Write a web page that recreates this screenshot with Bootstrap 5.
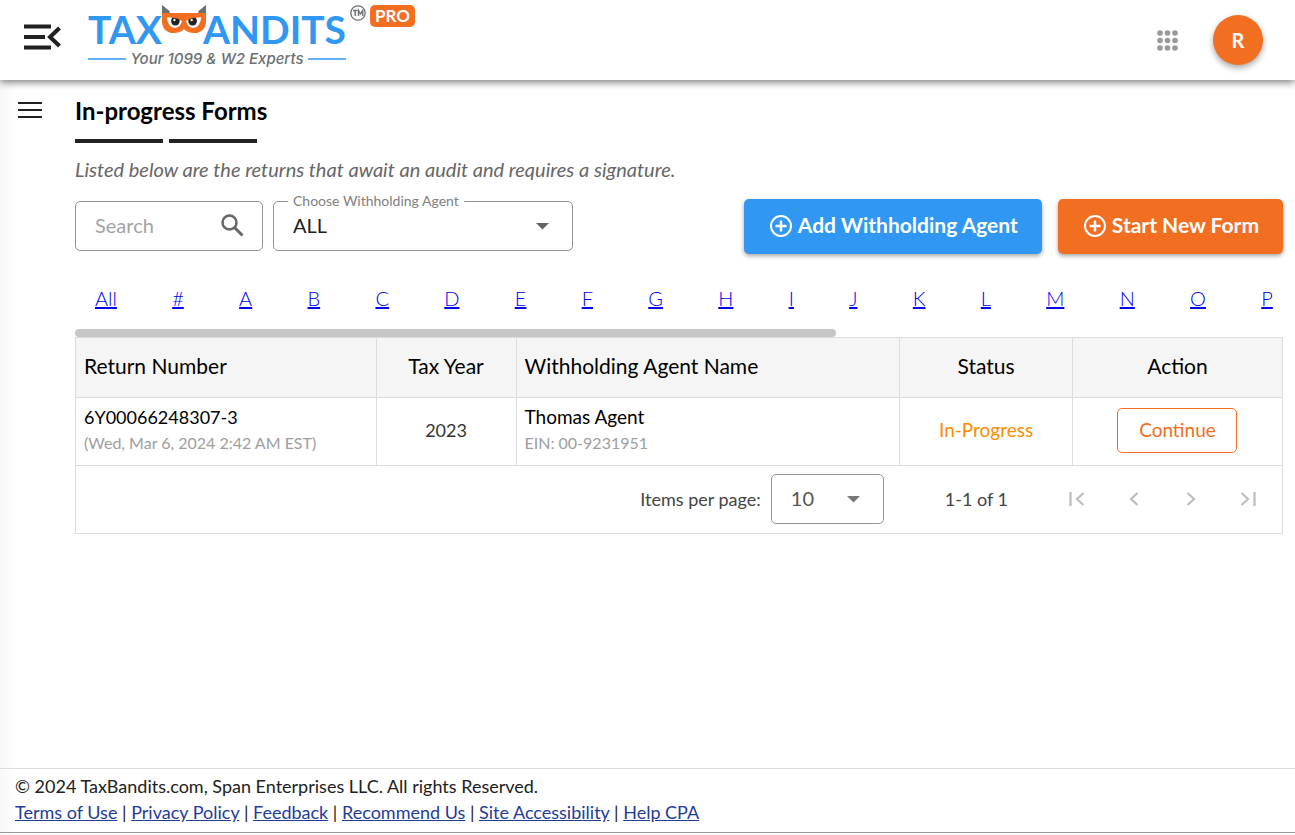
<!DOCTYPE html>
<html lang="en">
<head>
<meta charset="utf-8">
<meta name="viewport" content="width=device-width, initial-scale=1">
<title>In-progress Forms - TaxBandits</title>
<link href="https://cdn.jsdelivr.net/npm/bootstrap@5.3.0/dist/css/bootstrap.min.css" rel="stylesheet">
<style>
:root { --tb-blue: #3097f3; --tb-orange: #f26e21; --tb-line: #dcdcdc; }
body { font-family: Lato, "Liberation Sans", sans-serif; font-size: 18px; line-height: 26px; color: #212121; background: linear-gradient(to right, #f8f8f8, #fff 16px); }
svg { display: block; flex: none; }
.icon-btn { border: 0; background: none; padding: 0; color: #212121; }
.topbar { height: 80px; padding: 0 32px 0 24px; background: #fff; box-shadow: 0 2px 8px rgba(0,0,0,.55); }
.menu-toggle { margin-bottom: 7px; }
.brand { padding-top: 5px; margin-left: 27px; color: #6b7072; text-decoration: none; }
.brand-name { height: 46px; padding-bottom: 3px; font-size: 39px; font-weight: 700; line-height: 38px; color: var(--tb-blue); }
.brand-name svg { margin: 0 -4px 0 -1px; position: relative; z-index: 1; }
.brand-tag { font: italic 500 15px/16px Inter, sans-serif; gap: 4px; }
.brand-tag i { flex: 1; height: 2px; background: #62b0f6; }
.pro-tag { background: var(--tb-orange); color: #fff; border-radius: 5px; font-size: 17px; font-weight: 700; line-height: 22px; padding: 0 5px; margin: 5px 0 0 4px; }
.avatar { width: 50px; height: 50px; background: var(--tb-orange); font-weight: 700; box-shadow: 0 3px 6px rgba(0,0,0,.35); margin-left: 35px; }
.side { width: 75px; padding: 19px 0 0 17px; }
.content { padding: 17px 12px 0 0; min-width: 0; }
.page-title { font-size: 24px; line-height: 28px; font-weight: 700; color: #000; }
.title-bars { gap: 6px; margin-top: 14px; }
.title-bars i { width: 88px; height: 4px; background: #212121; }
.intro { font-size: 20px; font-style: italic; color: #666; margin: 13px 0 17px; }
.fields { gap: 10px; padding-top: 2px; }
.field { border: 1px solid #949494; border-radius: 5px; height: 50px; background: #fff; position: relative; }
.field input, .field select { border: 0; outline: 0; background: none; width: 100%; height: 100%; padding: 0 19px 2px; font-size: 20px; color: #212121; appearance: none; }
.field input::placeholder { color: #a3a3a3; opacity: 1; }
.field > svg { position: absolute; right: 17px; top: 50%; transform: translateY(-50%); pointer-events: none; }
.field label { position: absolute; left: 14px; top: -12px; padding: 0 5px; font-size: 14px; line-height: 22px; background: #fff; color: #808080; white-space: nowrap; }
.f-search { width: 188px; }
.f-agent { width: 300px; }
.f-page { width: 113px; }
.field.f-page select { color: #555; }
.btn-main { height: 55px; border: 0; border-radius: 5px; color: #fff; font-size: 21px; font-weight: 700; padding: 0 24px 3px; gap: 4px; box-shadow: 0 2px 4px rgba(0,0,0,.35); }
.btn-main:hover { color: #fff; }
.bg-blue, .bg-blue:hover { background: var(--tb-blue); }
.bg-orange, .bg-orange:hover { background: var(--tb-orange); }
.letters { padding: 30px 10px 17px 20px; font-size: 20px; font-weight: 300; line-height: 28px; overflow: hidden; }
.letters a { color: #0000ee; text-decoration-thickness: 2px; }
.scroll-thumb { width: 63%; height: 8px; border-radius: 4px; background: #c6c6c6; }
.forms { table-layout: fixed; border: 1px solid var(--tb-line); color: #000; }
.forms th, .forms td { border-left: 1px solid var(--tb-line); border-bottom: 1px solid var(--tb-line); padding: 5px 8px 8px; }
.forms th { height: 60px; background: #f5f5f5; font-size: 21px; font-weight: 400; }
.forms td { height: 68px; font-size: 19px; }
.forms .return-no { font-size: 18px; }
.forms .subtext { font-size: 16px; color: #9e9e9e; }
.btn-continue { width: 120px; height: 45px; font-size: 19px; border: 1px solid var(--tb-orange); border-radius: 5px; color: var(--tb-orange); }
.forms .status { color: #fb8c00; }
.forms .year { font-size: 18px; color: #333; }
.pager { border: 1px solid var(--tb-line); border-top: 0; height: 68px; padding: 0 22px 2px 0; color: #444; }
.pager .field { margin: 0 61px 0 10px; }
.pager-nav { gap: 33px; margin-left: 57px; }
.pager-nav .icon-btn { color: #bdbdbd; }
.foot { border-top: 1px solid var(--tb-line); border-bottom: 1px solid #999; padding: 4px 15px 7px; margin-bottom: 2px; }
.foot a { color: #1f3c9a; }
</style>
</head>
<body class="d-flex flex-column min-vh-100">
<header class="topbar d-flex align-items-center">
  <button class="icon-btn menu-toggle" aria-label="Collapse menu">
    <svg width="37" height="26" fill="none" stroke="currentColor" stroke-width="4"><path d="M0 2.500H27M0 13H21M0 23.500H27"/><path d="M35.500 4L26 13l9.500 9"/></svg>
  </button>
  <a href="#" class="brand d-flex align-self-start">
    <span>
      <span class="brand-name d-flex align-items-end">
        <span>TAX</span>
        <svg class="align-self-start" width="46" height="29" viewBox="0 0 48 29" preserveAspectRatio="none">
          <path d="M1 0L9 6L9 9H1ZM47 0L39 6V9H47Z" fill="#6b7072"/>
          <path d="M1 8H47V16C47 31 29 30 24 24C19 30 1 31 1 16Z" fill="#f26e21"/>
          <path d="M6 12Q15 12 22 16Q20 23 14 23Q7 22 6 12ZM42 12Q33 12 26 16Q28 23 34 23Q41 22 42 12Z" fill="#fff"/>
          <circle cx="15" cy="16" r="4.500" fill="#222"/><circle cx="33" cy="16" r="4.500" fill="#222"/>
          <circle cx="14" cy="15" r="1.200" fill="#fff"/><circle cx="32" cy="15" r="1.200" fill="#fff"/>
          <path d="M4 11Q15 10 24 15Q33 10 44 11" fill="none" stroke="#f26e21" stroke-width="3"/>
        </svg>
        <span>ANDITS</span>
      </span>
      <span class="brand-tag d-flex align-items-center"><i></i><span>Your 1099 &amp; W2 Experts</span><i></i></span>
    </span>
    <svg class="ms-1" width="16" height="16" viewBox="0 0 16 16"><circle cx="8" cy="8" r="7.200" fill="none" stroke="#6b7072" stroke-width="1.300"/><path d="M3 5.500H7.500M5.200 5.500V11M8.500 11V5.500L10.500 9L12.700 5.500V11" fill="none" stroke="#6b7072" stroke-width="1.400"/></svg>
  </a>
  <span class="pro-tag align-self-start">PRO</span>
  <button class="icon-btn ms-auto" aria-label="Apps">
    <svg width="21" height="21" fill="#999"><circle cx="3" cy="3" r="2.800"/><circle cx="10.500" cy="3" r="2.800"/><circle cx="18" cy="3" r="2.800"/><circle cx="3" cy="10.500" r="2.800"/><circle cx="10.500" cy="10.500" r="2.800"/><circle cx="18" cy="10.500" r="2.800"/><circle cx="3" cy="18" r="2.800"/><circle cx="10.500" cy="18" r="2.800"/><circle cx="18" cy="18" r="2.800"/></svg>
  </button>
  <button class="avatar btn rounded-circle border-0 text-white p-0 fs-5">R</button>
</header>

<div class="d-flex flex-grow-1">
  <aside class="side flex-shrink-0">
    <button class="icon-btn d-block" aria-label="Open menu">
      <svg width="26" height="22" fill="none" stroke="currentColor" stroke-width="2"><path d="M1 4H25M1 11H25M1 18H25"/></svg>
    </button>
  </aside>
  <main class="content flex-grow-1">
    <h1 class="page-title mb-0">In-progress Forms</h1>
    <div class="title-bars d-flex"><i></i><i></i></div>
    <p class="intro">Listed below are the returns that await an audit and requires a signature.</p>
    <div class="d-flex align-items-start">
      <div class="fields d-flex">
        <div class="field f-search">
          <input type="text" placeholder="Search" aria-label="Search">
          <svg width="26" height="26" viewBox="0 0 26 26" fill="none" stroke="#666" stroke-width="2.500"><circle cx="10.500" cy="9.500" r="7"/><path d="M15.500 14.500L23.500 22.500" stroke-width="3"/></svg>
        </div>
        <div class="field f-agent">
          <label for="agent">Choose Withholding Agent</label>
          <select id="agent"><option>ALL</option></select>
          <svg width="26" height="12"><path d="M7 3H20L13.500 9.500Z" fill="#666"/></svg>
        </div>
      </div>
      <div class="d-flex gap-3 ms-auto">
        <button class="btn btn-main bg-blue d-flex align-items-center">
          <svg width="26" height="26" fill="none" stroke="#fff" stroke-width="2"><circle cx="13" cy="14" r="10"/><path d="M7.500 14H18.500M13 8.500V19.500" stroke-width="2.500"/></svg>
          Add Withholding Agent</button>
        <button class="btn btn-main bg-orange d-flex align-items-center">
          <svg width="26" height="26" fill="none" stroke="#fff" stroke-width="2"><circle cx="13" cy="14" r="10"/><path d="M7.500 14H18.500M13 8.500V19.500" stroke-width="2.500"/></svg>
          Start New Form</button>
      </div>
    </div>
    <nav class="letters d-flex justify-content-between" aria-label="Filter by letter">
      <a href="#">All</a><a href="#">#</a><a href="#">A</a><a href="#">B</a><a href="#">C</a><a href="#">D</a><a href="#">E</a><a href="#">F</a><a href="#">G</a><a href="#">H</a><a href="#">I</a><a href="#">J</a><a href="#">K</a><a href="#">L</a><a href="#">M</a><a href="#">N</a><a href="#">O</a><a href="#">P</a>
    </nav>
    <div class="scroll-thumb"></div>
    <table class="forms w-100">
      <colgroup><col style="width:24.9%"><col style="width:11.6%"><col style="width:31.8%"><col style="width:14.3%"><col style="width:17.4%"></colgroup>
      <thead><tr><th>Return Number</th><th class="text-center">Tax Year</th><th>Withholding Agent Name</th><th class="text-center">Status</th><th class="text-center">Action</th></tr></thead>
      <tbody><tr>
        <td><div class="return-no">6Y00066248307-3</div><div class="subtext">(Wed, Mar 6, 2024 2:42 AM EST)</div></td>
        <td class="text-center year">2023</td>
        <td><div>Thomas Agent</div><div class="subtext">EIN: 00-9231951</div></td>
        <td class="text-center status">In-Progress</td>
        <td class="text-center"><button class="btn btn-continue p-0">Continue</button></td>
      </tr></tbody>
    </table>
    <div class="pager d-flex align-items-center justify-content-end">
      <label for="per-page">Items per page:</label>
      <div class="field f-page">
        <select id="per-page"><option>10</option></select>
        <svg width="26" height="12"><path d="M7 3H20L13.500 9.500Z" fill="#777"/></svg>
      </div>
      <span>1-1 of 1</span>
      <div class="pager-nav d-flex">
        <button class="icon-btn" aria-label="First page"><svg width="24" height="24" fill="none" stroke="currentColor" stroke-width="2.200"><path d="M5.500 5V19M18.500 6L12 12L18.500 18"/></svg></button>
        <button class="icon-btn" aria-label="Previous page"><svg width="24" height="24" fill="none" stroke="currentColor" stroke-width="2.200"><path d="M15.500 6L9 12L15.500 18"/></svg></button>
        <button class="icon-btn" aria-label="Next page"><svg width="24" height="24" fill="none" stroke="currentColor" stroke-width="2.200"><path d="M8.500 6L15 12L8.500 18"/></svg></button>
        <button class="icon-btn" aria-label="Last page"><svg width="24" height="24" fill="none" stroke="currentColor" stroke-width="2.200"><path d="M5.500 6L12 12L5.500 18M18.500 5V19"/></svg></button>
      </div>
    </div>
  </main>
</div>

<footer class="foot">
  <div>© 2024 TaxBandits.com, Span Enterprises LLC. All rights Reserved.</div>
  <div><a href="#">Terms of Use</a> | <a href="#">Privacy Policy</a> | <a href="#">Feedback</a> | <a href="#">Recommend Us</a> | <a href="#">Site Accessibility</a> | <a href="#">Help CPA</a></div>
</footer>
<script src="https://cdn.jsdelivr.net/npm/bootstrap@5.3.0/dist/js/bootstrap.bundle.min.js"></script>
</body>
</html>
